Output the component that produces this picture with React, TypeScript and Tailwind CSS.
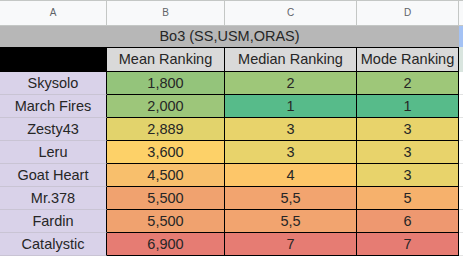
import React from "react";

const rows = [
  { name: "Skysolo", mean: "1,800", meanBg: "#94c47b", med: "2", medBg: "#9ec779", mode: "2", modeBg: "#9ec779" },
  { name: "March Fires", mean: "2,000", meanBg: "#9dc67a", med: "1", medBg: "#57bb8a", mode: "1", modeBg: "#57bb8a" },
  { name: "Zesty43", mean: "2,889", meanBg: "#e2d36c", med: "3", medBg: "#e8d36b", mode: "3", modeBg: "#e8d36b" },
  { name: "Leru", mean: "3,600", meanBg: "#fdd168", med: "3", medBg: "#e8d36b", mode: "3", modeBg: "#e8d36b" },
  { name: "Goat Heart", mean: "4,500", meanBg: "#f8bf6c", med: "4", medBg: "#fdc669", mode: "3", modeBg: "#e8d36b" },
  { name: "Mr.378", mean: "5,500", meanBg: "#f0a26f", med: "5,5", medBg: "#f2a46f", mode: "5", modeBg: "#f6b16c" },
  { name: "Fardin", mean: "5,500", meanBg: "#f0a26f", med: "5,5", medBg: "#f2a46f", mode: "6", modeBg: "#ee9870" },
  { name: "Catalystic", mean: "6,900", meanBg: "#e67c73", med: "7", medBg: "#e67c73", mode: "7", modeBg: "#e67c73" },
];

export default function App() {
  return (
    <div
      className="w-[463px] h-[256px] overflow-hidden bg-white text-[14.5px] text-[#262626] leading-none"
      style={{ fontFamily: "'Liberation Sans', Arial, sans-serif" }}
    >
      {/* column letters */}
      <div className="flex h-[26px] border-t border-[#c4c7c5] bg-[#f8f9fa] text-[10px] text-[#5f6368]">
        <div className="w-[107px] flex items-center justify-center border-r border-b border-[#c4c7c5]">A</div>
        <div className="w-[118px] flex items-center justify-center border-r border-b border-[#c4c7c5]">B</div>
        <div className="w-[132px] flex items-center justify-center border-r border-b border-[#c4c7c5]">C</div>
        <div className="w-[102px] flex items-center justify-center border-r border-b border-[#c4c7c5]">D</div>
        <div className="flex-1 border-b border-[#c4c7c5]"></div>
      </div>
      {/* title row */}
      <div className="flex h-[21px]">
        <div className="w-[459px] bg-[#b7b7b7] flex items-center justify-center">Bo3 (SS,USM,ORAS)</div>
        <div className="flex-1 bg-[#a4c2f4]"></div>
      </div>
      {/* header row */}
      <div className="flex h-[25px]">
        <div className="w-[107px] bg-black border-r border-black"></div>
        <div className="w-[118px] bg-[#d9d9d9] border-r border-b border-t border-black flex items-center justify-center">Mean Ranking</div>
        <div className="w-[132px] bg-[#d9d9d9] border-r border-b border-t border-black flex items-center justify-center">Median Ranking</div>
        <div className="w-[102px] bg-[#d9d9d9] border-r border-b border-t border-black flex items-center justify-center">Mode Ranking</div>
        <div className="flex-1 bg-[#d9e5df]"></div>
      </div>
      {rows.map((r) => (
        <div key={r.name} className="flex h-[23px]">
          <div className="w-[107px] bg-[#d9d2e9] border-r border-r-black border-b border-b-[#c9c4d4] flex items-center justify-center">{r.name}</div>
          <div className="w-[118px] border-r border-b border-black flex items-center justify-center" style={{ backgroundColor: r.meanBg }}>{r.mean}</div>
          <div className="w-[132px] border-r border-b border-black flex items-center justify-center" style={{ backgroundColor: r.medBg }}>{r.med}</div>
          <div className="w-[102px] border-r border-b border-black flex items-center justify-center" style={{ backgroundColor: r.modeBg }}>{r.mode}</div>
          <div className="flex-1 bg-white border-b border-[#e2e3e3]"></div>
        </div>
      ))}
    </div>
  );
}
